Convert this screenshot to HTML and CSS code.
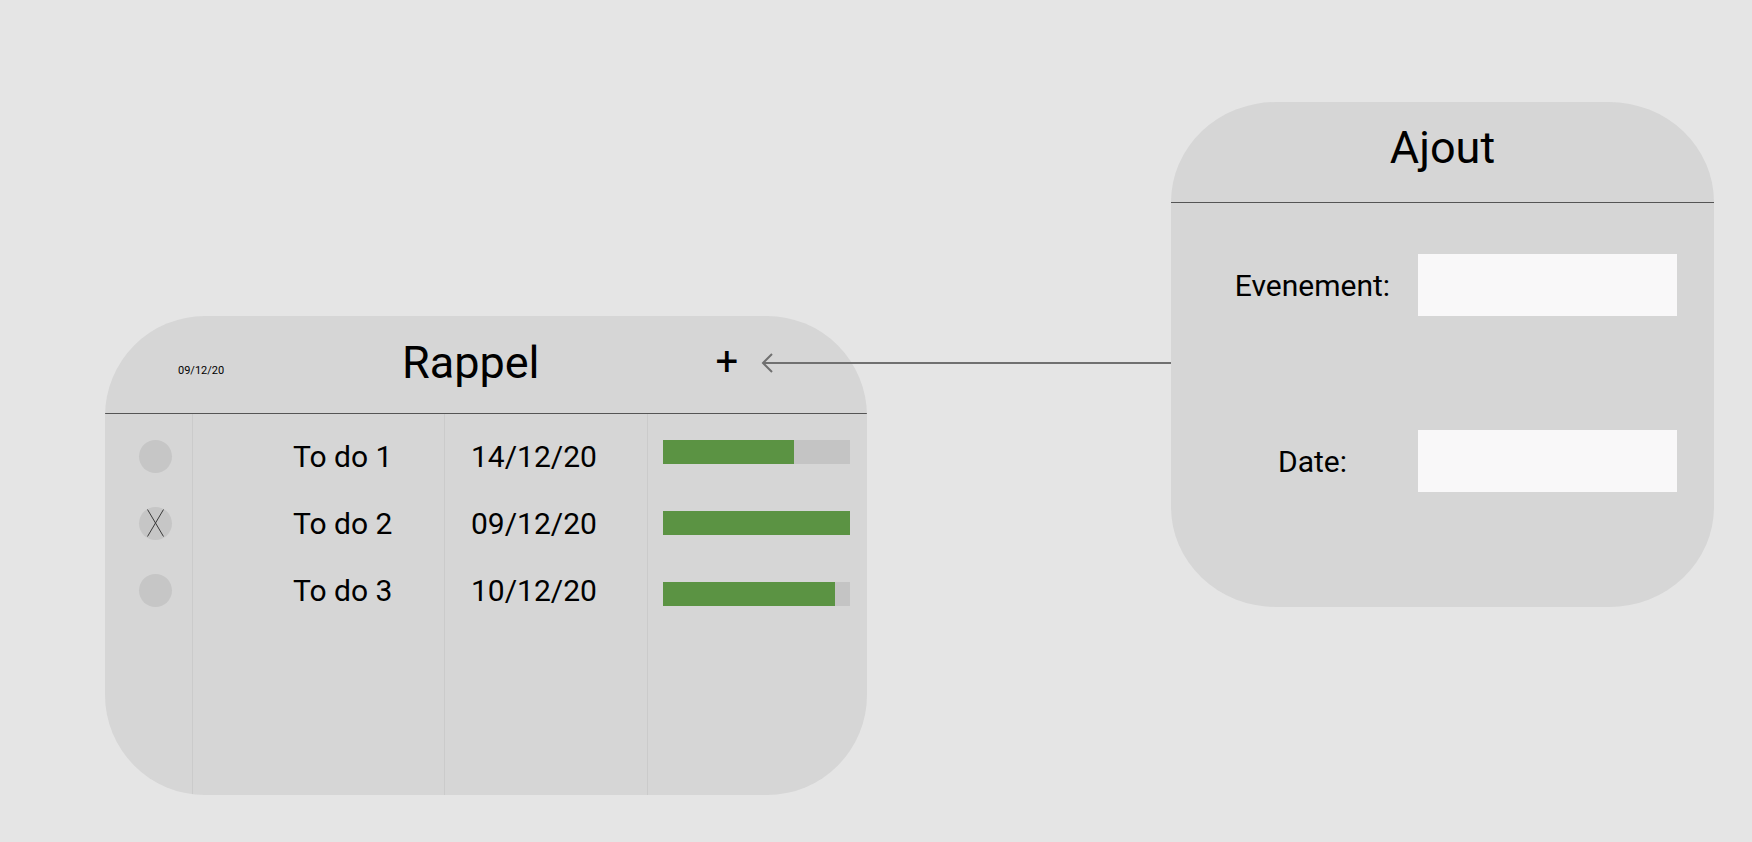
FILE: index.html
```html
<!DOCTYPE html>
<html lang="fr">
<head>
    <meta charset="UTF-8">
    <meta name="viewport" content="width=device-width, initial-scale=1.0">
    <title>Rappel - maquette</title>
    <link rel="stylesheet" href="styles.css">
</head>
<body>
    <div class="canvas">
        <!-- liste des rappels -->
        <section class="card rappel">
            <header class="rappel-head">
                <span class="stamp">09/12/20</span>
                <h1 class="title">Rappel</h1>
                <span class="add">+</span>
            </header>
            <div class="rappel-body">
                <div class="col col-check">
                    <div class="cell"><span class="dot"></span></div>
                    <div class="cell">
                        <span class="dot">
                            <svg class="cross" viewBox="0 0 33 33" width="33" height="33">
                                <path d="M8.5 2.5 L24.5 29.5 M24.5 2.5 L8.5 29.5" />
                            </svg>
                        </span>
                    </div>
                    <div class="cell"><span class="dot"></span></div>
                </div>
                <div class="col col-name">
                    <div class="cell">To do 1</div>
                    <div class="cell">To do 2</div>
                    <div class="cell">To do 3</div>
                </div>
                <div class="col col-date">
                    <div class="cell">14/12/20</div>
                    <div class="cell">09/12/20</div>
                    <div class="cell">10/12/20</div>
                </div>
                <div class="col col-bar">
                    <div class="bar"><div class="fill" style="width: 70%"></div></div>
                    <div class="bar"><div class="fill" style="width: 100%"></div></div>
                    <div class="bar"><div class="fill" style="width: 92%"></div></div>
                </div>
            </div>
        </section>

        <!-- formulaire d'ajout -->
        <section class="card ajout">
            <header class="ajout-head">
                <h2 class="title">Ajout</h2>
            </header>
            <div class="ajout-body">
                <label class="field-label">Evenement:</label>
                <div class="field"></div>
                <label class="field-label">Date:</label>
                <div class="field"></div>
            </div>
        </section>

        <!-- lien entre le + et le formulaire -->
        <svg class="link-arrow" viewBox="0 0 410 20" width="410" height="20">
            <path d="M11 1 L2 10 L11 19 M2 10 H410" />
        </svg>
    </div>
</body>
</html>
```

FILE: styles.css
```css
body {
    margin: 0;
    background: #e5e5e5;
    font-family: 'Roboto', 'Liberation Sans', sans-serif;
    color: #000;
}
.canvas {
    position: relative;
    display: flex;
    align-items: flex-start;
    box-sizing: border-box;
    width: 1752px;
    height: 842px;
    padding: 102px 38px 0 105px;
}
.card {
    background: #d6d6d6;
    overflow: hidden;
}
.title {
    margin: 0;
    font-size: 45px;
    font-weight: 400;
    line-height: 1;
}

/* Rappel */
.rappel {
    width: 762px;
    height: 479px;
    margin-top: 214px;
    border-radius: 100px;
    display: flex;
    flex-direction: column;
}
.rappel-head {
    box-sizing: border-box;
    height: 98px;
    flex-shrink: 0;
    border-bottom: 1px solid #555;
    display: flex;
    align-items: center;
}
.stamp {
    width: 224px;
    margin-left: 73px;
    margin-top: 12px;
    font-size: 11px;
}
.rappel-head .title {
    margin-bottom: 5px;
}
.add {
    margin-left: 176px;
    margin-bottom: 5px;
    font-size: 40px;
    line-height: 1;
}
.rappel-body {
    flex: 1;
    display: grid;
    grid-template-columns: 88px 252px 203px 1fr;
}
.col {
    box-sizing: border-box;
    padding-top: 9px;
    border-right: 1px solid #cbcbcb;
}
.cell {
    height: 67px;
    display: flex;
    align-items: center;
    font-size: 30px;
}
.col-check .cell {
    padding-left: 34px;
}
.dot {
    display: block;
    width: 33px;
    height: 33px;
    border-radius: 50%;
    background: #c6c6c6;
}
.cross {
    display: block;
    fill: none;
    stroke: #3a3a3a;
    stroke-width: 1;
}
.col-name .cell {
    padding-left: 100px;
}
.col-date .cell {
    padding-left: 26px;
}
.col-bar {
    border-right: none;
    padding: 26px 17px 0 15px;
    display: flex;
    flex-direction: column;
    gap: 47px;
}
.bar {
    height: 24px;
    background: #c4c4c4;
}
.fill {
    height: 100%;
    background: #5b9343;
}

/* Ajout */
.ajout {
    width: 543px;
    height: 505px;
    margin-left: auto;
    border-radius: 105px / 100px;
}
.ajout-head {
    box-sizing: border-box;
    height: 101px;
    border-bottom: 1px solid #555;
    display: flex;
    align-items: center;
    justify-content: center;
    padding-bottom: 10px;
}
.ajout-body {
    display: grid;
    grid-template-columns: 247px 259px;
    grid-auto-rows: 62px;
    row-gap: 114px;
    padding-top: 51px;
    align-items: center;
}
.field-label {
    padding-left: 36px;
    text-align: center;
    font-size: 30px;
}
.field {
    height: 62px;
    background: #f9f8f9;
}

/* flèche */
.link-arrow {
    position: absolute;
    left: 761px;
    top: 353px;
    fill: none;
    stroke: #707070;
    stroke-width: 2;
}
```
